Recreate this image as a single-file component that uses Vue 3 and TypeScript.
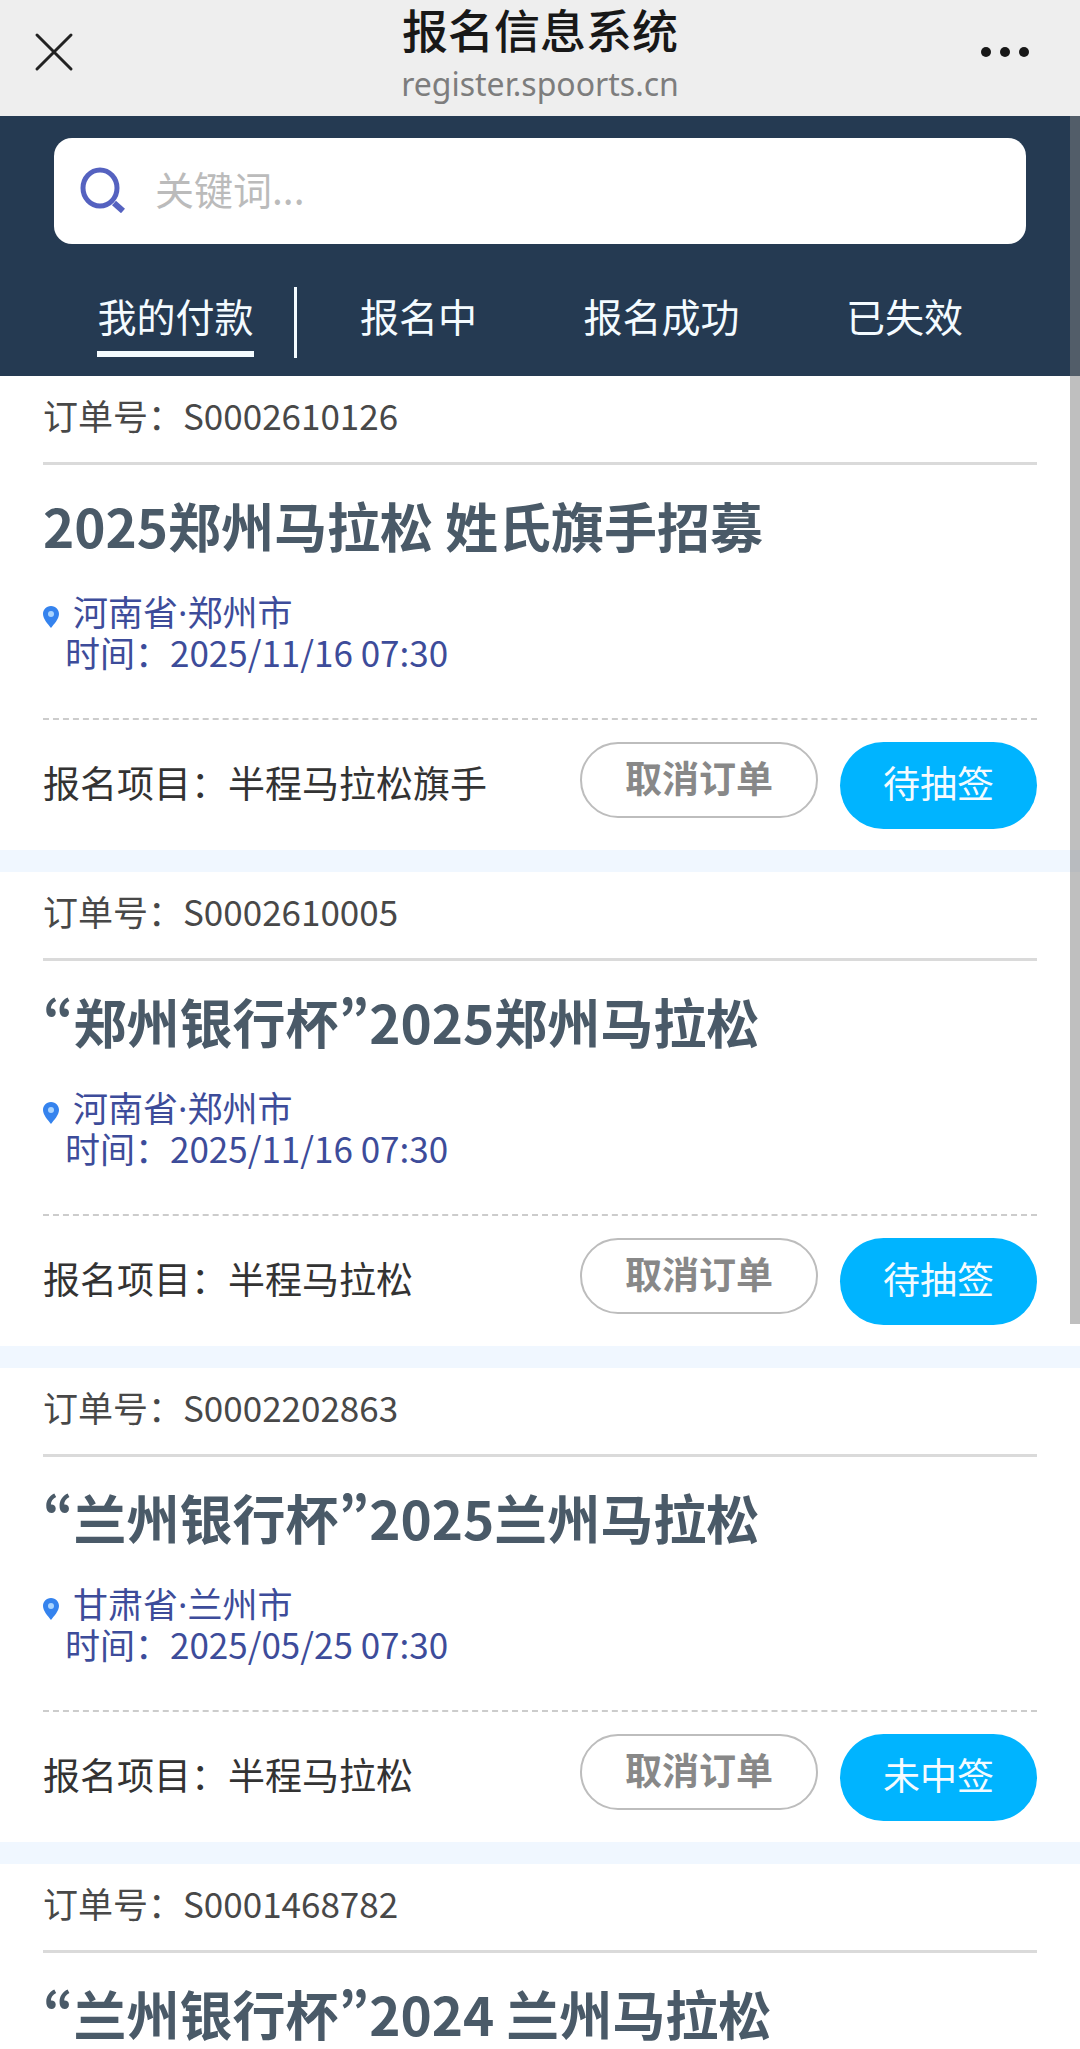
<script setup lang="ts">
import { ref } from 'vue'

interface Order {
  id: string
  title: string
  detail?: { place: string; time: string; item: string; status: string }
}

const keyword = ref('')
const tabs: string[] = ['我的付款', '报名中', '报名成功', '已失效']
const active = ref(0)

const orders: Order[] = [
  {
    id: 'S0002610126',
    title: '2025郑州马拉松 姓氏旗手招募',
    detail: { place: '河南省·郑州市', time: '2025/11/16 07:30', item: '半程马拉松旗手', status: '待抽签' },
  },
  {
    id: 'S0002610005',
    title: '“郑州银行杯”2025郑州马拉松',
    detail: { place: '河南省·郑州市', time: '2025/11/16 07:30', item: '半程马拉松', status: '待抽签' },
  },
  {
    id: 'S0002202863',
    title: '“兰州银行杯”2025兰州马拉松',
    detail: { place: '甘肃省·兰州市', time: '2025/05/25 07:30', item: '半程马拉松', status: '未中签' },
  },
  { id: 'S0001468782', title: '“兰州银行杯”2024 兰州马拉松' },
]
</script>

<template>
  <div class="screen">
    <header class="topbar">
      <button class="icon-btn" type="button" aria-label="关闭">
        <svg width="40" height="40" viewBox="0 0 40 40" fill="none" stroke="#222" stroke-width="3" stroke-linecap="round">
          <path d="M3 3L37 37M37 3L3 37" />
        </svg>
      </button>
      <div class="heading">
        <h1>报名信息系统</h1>
        <p>register.spoorts.cn</p>
      </div>
      <button class="icon-btn more" type="button" aria-label="更多">
        <svg width="50" height="12" viewBox="0 0 50 12" fill="#181818">
          <circle cx="6" cy="6" r="5" />
          <circle cx="25" cy="6" r="5" />
          <circle cx="44" cy="6" r="5" />
        </svg>
      </button>
    </header>

    <main class="content">
      <div class="panel">
        <label class="search">
          <svg width="46" height="46" viewBox="0 0 46 46" fill="none" stroke="#5562c0">
            <ellipse cx="20" cy="21" rx="17" ry="18" stroke-width="5" />
            <path d="M34 36L43 44" stroke-width="6" />
          </svg>
          <input v-model="keyword" type="text" placeholder="关键词..." aria-label="关键词" />
        </label>
        <nav class="tabs">
          <button
            v-for="(tab, i) in tabs"
            :key="tab"
            type="button"
            class="tab"
            :class="{ active: i === active }"
            @click="active = i"
          >
            <span>{{ tab }}</span>
          </button>
        </nav>
      </div>

      <article v-for="order in orders" :key="order.id" class="card">
        <p class="number">订单号：{{ order.id }}</p>
        <h2>{{ order.title }}</h2>
        <template v-if="order.detail">
          <div class="info">
            <p class="place">
              <svg width="16" height="22" viewBox="0 0 16 22">
                <path d="M8 0C3 0 0 4 0 8C0 13 5 18 8 22C11 18 16 13 16 8C16 4 13 0 8 0Z" fill="#3583ee" />
                <circle cx="8" cy="8" r="3" fill="#a9d4ff" />
              </svg>
              <span>{{ order.detail.place }}</span>
            </p>
            <p class="time">时间：{{ order.detail.time }}</p>
          </div>
          <footer class="actions">
            <p class="item">报名项目：{{ order.detail.item }}</p>
            <button class="cancel" type="button">取消订单</button>
            <button class="status" type="button">{{ order.detail.status }}</button>
          </footer>
        </template>
      </article>

      <div class="scrollbar" aria-hidden="true"></div>
    </main>
  </div>
</template>

<style>
body {
  margin: 0;
}
</style>

<style scoped>
.screen {
  display: flex;
  flex-direction: column;
  height: 100vh;
  overflow: hidden;
  background: #fff;
  font-family: 'Noto Sans CJK SC', 'Noto Sans', sans-serif;
}

h1,
h2,
p {
  margin: 0;
}

button {
  border: 0;
  padding: 0;
  background: none;
  font-family: inherit;
  cursor: pointer;
}

svg {
  display: block;
  flex: none;
}

.topbar {
  flex: none;
  display: flex;
  align-items: flex-start;
  justify-content: space-between;
  box-sizing: border-box;
  height: 116px;
  padding: 0 50px 0 34px;
  background: #eee;
}

.icon-btn {
  display: flex;
  align-items: center;
  width: 66px;
  height: 104px;
}

.more {
  justify-content: flex-end;
  width: 50px;
}

.heading {
  text-align: center;
}

h1 {
  font-family: 'Noto Sans', 'Noto Sans CJK SC', sans-serif;
  font-size: 46px;
  line-height: 60px;
  font-weight: 500;
  color: #181818;
}

.heading p {
  font-family: 'Noto Sans', sans-serif;
  font-size: 32px;
  line-height: 48px;
  color: #7d7d7d;
}

.content {
  flex: 1;
  min-height: 0;
  position: relative;
  overflow: hidden;
}

.panel {
  padding: 22px 54px 18px;
  background: #253a52;
}

.search {
  display: flex;
  align-items: center;
  gap: 29px;
  box-sizing: border-box;
  height: 106px;
  padding: 0 26px 2px;
  border-radius: 18px;
  background: #fff;
}

.search input {
  flex: 1;
  min-width: 0;
  height: 60px;
  padding: 0 0 4px;
  border: 0;
  outline: 0;
  background: none;
  font-family: inherit;
  font-size: 39px;
  color: #333;
}

.search input::placeholder {
  color: #bbb;
  opacity: 1;
}

.tabs {
  display: grid;
  grid-template-columns: repeat(4, 1fr);
  padding-top: 43px;
}

.tab {
  height: 71px;
  font-size: 39px;
  line-height: 56px;
  color: #f4fbff;
  display: flex;
  justify-content: center;
  align-items: flex-start;
}

.tab:first-child {
  padding-left: 3px;
  border-right: 3px solid #f4fbff;
}

.tab span {
  box-sizing: border-box;
  height: 70px;
}

.tab.active span {
  border-bottom: 6px solid #f4fbff;
}

.card {
  padding: 0 43px;
}

.card + .card {
  border-top: 22px solid #f0f7ff;
}

.number {
  height: 86px;
  border-bottom: 3px solid #dadada;
  font-size: 35px;
  line-height: 78px;
  color: #484848;
}

h2 {
  padding-top: 22px;
  font-size: 53px;
  line-height: 76px;
  font-weight: 700;
  font-feature-settings: 'pwid';
  color: #4a5a68;
  white-space: nowrap;
}

.info {
  padding: 30px 0 47px;
  border-bottom: 2px dashed #ccc;
  font-size: 35px;
  line-height: 38px;
  color: #3d4c9a;
}

.place {
  display: flex;
  align-items: center;
  gap: 14px;
  font-family: 'Noto Sans', 'Noto Sans CJK SC', sans-serif;
  line-height: 40px;
}

.place svg {
  margin-top: 8px;
}

.time {
  padding-left: 22px;
}

.actions {
  display: flex;
  align-items: flex-start;
  padding: 22px 0 21px;
}

.item {
  flex: 1;
  font-size: 37px;
  line-height: 80px;
  color: #333;
}

.cancel {
  box-sizing: border-box;
  height: 76px;
  width: 238px;
  margin-right: 22px;
  padding-bottom: 7px;
  border: 2px solid #bdbdbd;
  border-radius: 38px;
  font-size: 37px;
  font-weight: 700;
  color: #888;
}

.status {
  height: 87px;
  width: 197px;
  padding-bottom: 7px;
  border-radius: 44px;
  background: #00b4ff;
  font-size: 37px;
  color: #f4fbff;
}

.scrollbar {
  position: absolute;
  top: 0;
  right: 0;
  width: 10px;
  height: 1208px;
  background: rgba(128, 128, 128, 0.5);
}
</style>
